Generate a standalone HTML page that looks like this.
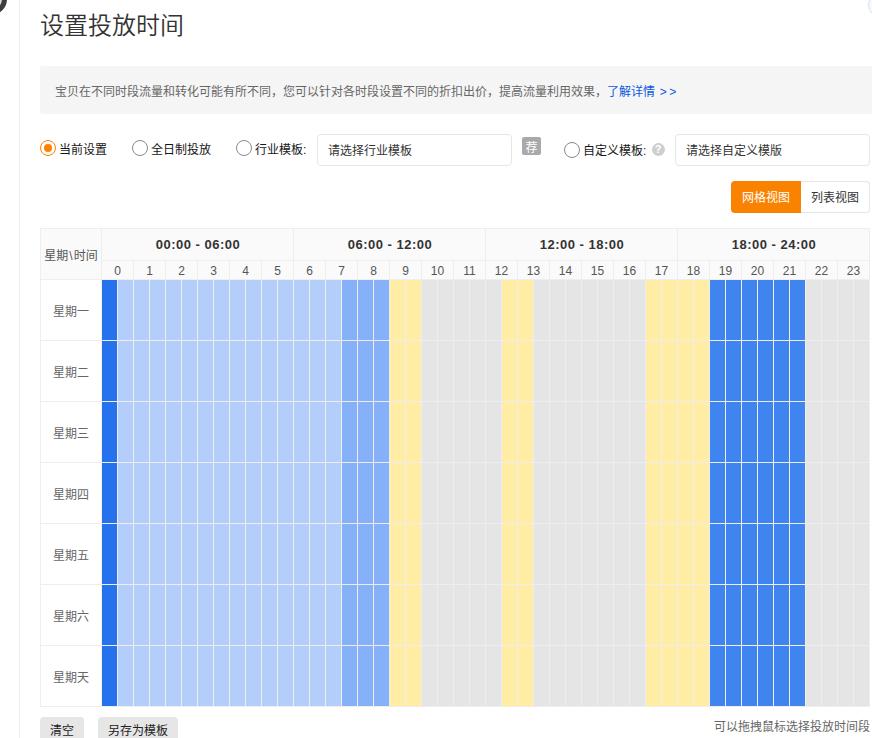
<!DOCTYPE html>
<html lang="zh-CN"><head><meta charset="utf-8"><title>设置投放时间</title>
<style>
*{box-sizing:border-box;margin:0;padding:0}
html,body{width:872px;height:738px;overflow:hidden;background:#fff}
body{position:relative;font-family:"Liberation Sans","Noto Sans CJK SC",sans-serif;font-size:12px;color:#333}
.abs{position:absolute}
.vline{left:19px;top:0;width:1px;height:738px;background:#eee}
.avatar{left:-25px;top:-17.5px;width:32px;height:32px;border-radius:50%;background:#cfd8f0;border:5px solid #3d3d3a}
.ring{left:868px;top:-7px;width:24px;height:24px;border-radius:50%;border:1.5px solid #dddde8;background:#f6f9ff}
h1{left:40px;top:8px;font-size:24px;font-weight:350;line-height:36px;color:#333;white-space:nowrap}
.banner{left:40px;top:66px;width:840px;height:48px;background:#f5f5f5;border-radius:3px;padding-left:15px;padding-top:2px;line-height:48px;color:#666;white-space:nowrap}
.banner a{color:#0a58e0;text-decoration:none}
.radio{width:16px;height:16px;border-radius:50%;border:1px solid #8a8a8a;background:#fff}
.radio.on{border-color:#ff8000}
.radio.on:after{content:"";position:absolute;left:3px;top:3px;width:8px;height:8px;border-radius:50%;background:#ff8000}
.lbl{line-height:16px;white-space:nowrap;color:#151515}
.sel{height:32px;border:1px solid #e6e6e6;border-radius:4px;background:#fff;line-height:30px;padding-top:1px;padding-left:10px;color:#333;white-space:nowrap}
.badge{left:522px;top:137px;width:19px;height:18px;background:#a9a9a9;border-radius:2px;color:#fff;font-size:12px;line-height:18px;padding-top:2px;text-align:center}
.help{left:651.5px;top:143px;width:13px;height:13px;border-radius:50%;background:#cecece;color:#fff;font-size:11px;font-weight:700;line-height:13px;text-align:center}
.btn1{left:731px;top:181px;width:70px;height:32px;background:#f98200;color:#fff;border-radius:4px 0 0 4px;line-height:32px;padding-top:1px;text-align:center}
.btn2{left:801px;top:181px;width:69px;height:32px;background:#fff;color:#333;border:1px solid #e6e6e6;border-left:0;border-radius:0 4px 4px 0;line-height:30px;padding-top:1px;text-align:center}
.tbl{left:40px;top:228px;width:830px;height:479px;border:1px solid #eee;background:#fff}
.hd{background:#fafafa}
.cell{position:absolute;width:15px;height:60px}
.c0{background:#2672ed}.c1{background:#b3cefb}.c2{background:#86b0f7}.c3{background:#4084f0}.cy{background:#ffeca5}.cg{background:#e5e5e5}
.gsep{position:absolute;background:#eee}
.hh{position:absolute;top:33px;height:19px;width:32px;text-align:center;line-height:19px;color:#555;font-size:12px}
.gh{position:absolute;top:0;height:32px;width:192px;text-align:center;line-height:32px;font-weight:700;font-size:13px;letter-spacing:0.5px;color:#333}
.rl{position:absolute;left:0;width:60px;height:60px;line-height:60px;padding-top:2px;text-align:center;color:#666}
.b{background:#e6e6e6;border-radius:4px;height:26px;line-height:28px;text-align:center;color:#222}
</style></head><body>
<div class="abs vline"></div>
<div class="abs avatar"></div>
<div class="abs ring"></div>
<h1 class="abs">设置投放时间</h1>
<div class="abs banner">宝贝在不同时段流量和转化可能有所不同，您可以针对各时段设置不同的折扣出价，提高流量利用效果，<a>了解详情 <span style="letter-spacing:2.3px;margin-left:1.5px">&gt;&gt;</span></a></div>

<div class="abs radio on" style="left:40px;top:140px"></div><div class="abs lbl" style="left:59px;top:142px">当前设置</div>
<div class="abs radio" style="left:132px;top:140px"></div><div class="abs lbl" style="left:151px;top:142px">全日制投放</div>
<div class="abs radio" style="left:236px;top:140px"></div><div class="abs lbl" style="left:255px;top:142px">行业模板:</div>
<div class="abs sel" style="left:317px;top:134px;width:195px">请选择行业模板</div>
<div class="abs badge">荐</div>
<div class="abs radio" style="left:564px;top:142px"></div><div class="abs lbl" style="left:583px;top:143px">自定义模板:</div>
<div class="abs help">?</div>
<div class="abs sel" style="left:675px;top:134px;width:195px">请选择自定义模版</div>
<div class="abs btn1">网格视图</div>
<div class="abs btn2">列表视图</div>

<div class="abs tbl">
<div class="abs hd" style="left:0;top:0;width:828px;height:51px"></div>
<div class="abs" style="left:0;top:0;width:60px;height:51px;line-height:51px;padding-top:1.5px;text-align:center;color:#555;white-space:nowrap">星期<span style="margin:0 1px">\</span>时间</div>
<div class="gsep" style="left:60px;top:0;width:1px;height:477px"></div>
<div class="gsep" style="left:61px;top:31px;width:768px;height:1px"></div>
<div class="gsep" style="left:0;top:50px;width:829px;height:1px"></div>
<div class="gh" style="left:61px;height:31px;line-height:31px">00:00 - 06:00</div>
<div class="gsep" style="left:252px;top:0;width:1px;height:51px"></div>
<div class="gh" style="left:253px;height:31px;line-height:31px">06:00 - 12:00</div>
<div class="gsep" style="left:444px;top:0;width:1px;height:51px"></div>
<div class="gh" style="left:445px;height:31px;line-height:31px">12:00 - 18:00</div>
<div class="gsep" style="left:636px;top:0;width:1px;height:51px"></div>
<div class="gh" style="left:637px;height:31px;line-height:31px">18:00 - 24:00</div>
<div class="hh" style="left:61px;width:31px">0</div>
<div class="gsep" style="left:92px;top:32px;width:1px;height:19px"></div>
<div class="hh" style="left:93px;width:31px">1</div>
<div class="gsep" style="left:124px;top:32px;width:1px;height:19px"></div>
<div class="hh" style="left:125px;width:31px">2</div>
<div class="gsep" style="left:156px;top:32px;width:1px;height:19px"></div>
<div class="hh" style="left:157px;width:31px">3</div>
<div class="gsep" style="left:188px;top:32px;width:1px;height:19px"></div>
<div class="hh" style="left:189px;width:31px">4</div>
<div class="gsep" style="left:220px;top:32px;width:1px;height:19px"></div>
<div class="hh" style="left:221px;width:31px">5</div>
<div class="gsep" style="left:252px;top:32px;width:1px;height:19px"></div>
<div class="hh" style="left:253px;width:31px">6</div>
<div class="gsep" style="left:284px;top:32px;width:1px;height:19px"></div>
<div class="hh" style="left:285px;width:31px">7</div>
<div class="gsep" style="left:316px;top:32px;width:1px;height:19px"></div>
<div class="hh" style="left:317px;width:31px">8</div>
<div class="gsep" style="left:348px;top:32px;width:1px;height:19px"></div>
<div class="hh" style="left:349px;width:31px">9</div>
<div class="gsep" style="left:380px;top:32px;width:1px;height:19px"></div>
<div class="hh" style="left:381px;width:31px">10</div>
<div class="gsep" style="left:412px;top:32px;width:1px;height:19px"></div>
<div class="hh" style="left:413px;width:31px">11</div>
<div class="gsep" style="left:444px;top:32px;width:1px;height:19px"></div>
<div class="hh" style="left:445px;width:31px">12</div>
<div class="gsep" style="left:476px;top:32px;width:1px;height:19px"></div>
<div class="hh" style="left:477px;width:31px">13</div>
<div class="gsep" style="left:508px;top:32px;width:1px;height:19px"></div>
<div class="hh" style="left:509px;width:31px">14</div>
<div class="gsep" style="left:540px;top:32px;width:1px;height:19px"></div>
<div class="hh" style="left:541px;width:31px">15</div>
<div class="gsep" style="left:572px;top:32px;width:1px;height:19px"></div>
<div class="hh" style="left:573px;width:31px">16</div>
<div class="gsep" style="left:604px;top:32px;width:1px;height:19px"></div>
<div class="hh" style="left:605px;width:31px">17</div>
<div class="gsep" style="left:636px;top:32px;width:1px;height:19px"></div>
<div class="hh" style="left:637px;width:31px">18</div>
<div class="gsep" style="left:668px;top:32px;width:1px;height:19px"></div>
<div class="hh" style="left:669px;width:31px">19</div>
<div class="gsep" style="left:700px;top:32px;width:1px;height:19px"></div>
<div class="hh" style="left:701px;width:31px">20</div>
<div class="gsep" style="left:732px;top:32px;width:1px;height:19px"></div>
<div class="hh" style="left:733px;width:31px">21</div>
<div class="gsep" style="left:764px;top:32px;width:1px;height:19px"></div>
<div class="hh" style="left:765px;width:31px">22</div>
<div class="gsep" style="left:796px;top:32px;width:1px;height:19px"></div>
<div class="hh" style="left:797px;width:31px">23</div>
<div class="rl" style="top:51px">星期一</div>
<div class="gsep" style="left:61px;top:51px;width:768px;height:61px;background:#eee"></div>
<div class="gsep" style="left:0;top:111px;width:61px;height:1px"></div>
<div class="cell c0" style="left:61px;top:51px"></div>
<div class="cell c1" style="left:77px;top:51px"></div>
<div class="cell c1" style="left:93px;top:51px"></div>
<div class="cell c1" style="left:109px;top:51px"></div>
<div class="cell c1" style="left:125px;top:51px"></div>
<div class="cell c1" style="left:141px;top:51px"></div>
<div class="cell c1" style="left:157px;top:51px"></div>
<div class="cell c1" style="left:173px;top:51px"></div>
<div class="cell c1" style="left:189px;top:51px"></div>
<div class="cell c1" style="left:205px;top:51px"></div>
<div class="cell c1" style="left:221px;top:51px"></div>
<div class="cell c1" style="left:237px;top:51px"></div>
<div class="cell c1" style="left:253px;top:51px"></div>
<div class="cell c1" style="left:269px;top:51px"></div>
<div class="cell c1" style="left:285px;top:51px"></div>
<div class="cell c2" style="left:301px;top:51px"></div>
<div class="cell c2" style="left:317px;top:51px"></div>
<div class="cell c2" style="left:333px;top:51px"></div>
<div class="cell cy" style="left:349px;top:51px"></div>
<div class="cell cy" style="left:365px;top:51px"></div>
<div class="cell cg" style="left:381px;top:51px"></div>
<div class="cell cg" style="left:397px;top:51px"></div>
<div class="cell cg" style="left:413px;top:51px"></div>
<div class="cell cg" style="left:429px;top:51px"></div>
<div class="cell cg" style="left:445px;top:51px"></div>
<div class="cell cy" style="left:461px;top:51px"></div>
<div class="cell cy" style="left:477px;top:51px"></div>
<div class="cell cg" style="left:493px;top:51px"></div>
<div class="cell cg" style="left:509px;top:51px"></div>
<div class="cell cg" style="left:525px;top:51px"></div>
<div class="cell cg" style="left:541px;top:51px"></div>
<div class="cell cg" style="left:557px;top:51px"></div>
<div class="cell cg" style="left:573px;top:51px"></div>
<div class="cell cg" style="left:589px;top:51px"></div>
<div class="cell cy" style="left:605px;top:51px"></div>
<div class="cell cy" style="left:621px;top:51px"></div>
<div class="cell cy" style="left:637px;top:51px"></div>
<div class="cell cy" style="left:653px;top:51px"></div>
<div class="cell c3" style="left:669px;top:51px"></div>
<div class="cell c3" style="left:685px;top:51px"></div>
<div class="cell c3" style="left:701px;top:51px"></div>
<div class="cell c3" style="left:717px;top:51px"></div>
<div class="cell c3" style="left:733px;top:51px"></div>
<div class="cell c3" style="left:749px;top:51px"></div>
<div class="cell cg" style="left:765px;top:51px"></div>
<div class="cell cg" style="left:781px;top:51px"></div>
<div class="cell cg" style="left:797px;top:51px"></div>
<div class="cell cg" style="left:813px;top:51px"></div>
<div class="rl" style="top:112px">星期二</div>
<div class="gsep" style="left:61px;top:112px;width:768px;height:61px;background:#eee"></div>
<div class="gsep" style="left:0;top:172px;width:61px;height:1px"></div>
<div class="cell c0" style="left:61px;top:112px"></div>
<div class="cell c1" style="left:77px;top:112px"></div>
<div class="cell c1" style="left:93px;top:112px"></div>
<div class="cell c1" style="left:109px;top:112px"></div>
<div class="cell c1" style="left:125px;top:112px"></div>
<div class="cell c1" style="left:141px;top:112px"></div>
<div class="cell c1" style="left:157px;top:112px"></div>
<div class="cell c1" style="left:173px;top:112px"></div>
<div class="cell c1" style="left:189px;top:112px"></div>
<div class="cell c1" style="left:205px;top:112px"></div>
<div class="cell c1" style="left:221px;top:112px"></div>
<div class="cell c1" style="left:237px;top:112px"></div>
<div class="cell c1" style="left:253px;top:112px"></div>
<div class="cell c1" style="left:269px;top:112px"></div>
<div class="cell c1" style="left:285px;top:112px"></div>
<div class="cell c2" style="left:301px;top:112px"></div>
<div class="cell c2" style="left:317px;top:112px"></div>
<div class="cell c2" style="left:333px;top:112px"></div>
<div class="cell cy" style="left:349px;top:112px"></div>
<div class="cell cy" style="left:365px;top:112px"></div>
<div class="cell cg" style="left:381px;top:112px"></div>
<div class="cell cg" style="left:397px;top:112px"></div>
<div class="cell cg" style="left:413px;top:112px"></div>
<div class="cell cg" style="left:429px;top:112px"></div>
<div class="cell cg" style="left:445px;top:112px"></div>
<div class="cell cy" style="left:461px;top:112px"></div>
<div class="cell cy" style="left:477px;top:112px"></div>
<div class="cell cg" style="left:493px;top:112px"></div>
<div class="cell cg" style="left:509px;top:112px"></div>
<div class="cell cg" style="left:525px;top:112px"></div>
<div class="cell cg" style="left:541px;top:112px"></div>
<div class="cell cg" style="left:557px;top:112px"></div>
<div class="cell cg" style="left:573px;top:112px"></div>
<div class="cell cg" style="left:589px;top:112px"></div>
<div class="cell cy" style="left:605px;top:112px"></div>
<div class="cell cy" style="left:621px;top:112px"></div>
<div class="cell cy" style="left:637px;top:112px"></div>
<div class="cell cy" style="left:653px;top:112px"></div>
<div class="cell c3" style="left:669px;top:112px"></div>
<div class="cell c3" style="left:685px;top:112px"></div>
<div class="cell c3" style="left:701px;top:112px"></div>
<div class="cell c3" style="left:717px;top:112px"></div>
<div class="cell c3" style="left:733px;top:112px"></div>
<div class="cell c3" style="left:749px;top:112px"></div>
<div class="cell cg" style="left:765px;top:112px"></div>
<div class="cell cg" style="left:781px;top:112px"></div>
<div class="cell cg" style="left:797px;top:112px"></div>
<div class="cell cg" style="left:813px;top:112px"></div>
<div class="rl" style="top:173px">星期三</div>
<div class="gsep" style="left:61px;top:173px;width:768px;height:61px;background:#eee"></div>
<div class="gsep" style="left:0;top:233px;width:61px;height:1px"></div>
<div class="cell c0" style="left:61px;top:173px"></div>
<div class="cell c1" style="left:77px;top:173px"></div>
<div class="cell c1" style="left:93px;top:173px"></div>
<div class="cell c1" style="left:109px;top:173px"></div>
<div class="cell c1" style="left:125px;top:173px"></div>
<div class="cell c1" style="left:141px;top:173px"></div>
<div class="cell c1" style="left:157px;top:173px"></div>
<div class="cell c1" style="left:173px;top:173px"></div>
<div class="cell c1" style="left:189px;top:173px"></div>
<div class="cell c1" style="left:205px;top:173px"></div>
<div class="cell c1" style="left:221px;top:173px"></div>
<div class="cell c1" style="left:237px;top:173px"></div>
<div class="cell c1" style="left:253px;top:173px"></div>
<div class="cell c1" style="left:269px;top:173px"></div>
<div class="cell c1" style="left:285px;top:173px"></div>
<div class="cell c2" style="left:301px;top:173px"></div>
<div class="cell c2" style="left:317px;top:173px"></div>
<div class="cell c2" style="left:333px;top:173px"></div>
<div class="cell cy" style="left:349px;top:173px"></div>
<div class="cell cy" style="left:365px;top:173px"></div>
<div class="cell cg" style="left:381px;top:173px"></div>
<div class="cell cg" style="left:397px;top:173px"></div>
<div class="cell cg" style="left:413px;top:173px"></div>
<div class="cell cg" style="left:429px;top:173px"></div>
<div class="cell cg" style="left:445px;top:173px"></div>
<div class="cell cy" style="left:461px;top:173px"></div>
<div class="cell cy" style="left:477px;top:173px"></div>
<div class="cell cg" style="left:493px;top:173px"></div>
<div class="cell cg" style="left:509px;top:173px"></div>
<div class="cell cg" style="left:525px;top:173px"></div>
<div class="cell cg" style="left:541px;top:173px"></div>
<div class="cell cg" style="left:557px;top:173px"></div>
<div class="cell cg" style="left:573px;top:173px"></div>
<div class="cell cg" style="left:589px;top:173px"></div>
<div class="cell cy" style="left:605px;top:173px"></div>
<div class="cell cy" style="left:621px;top:173px"></div>
<div class="cell cy" style="left:637px;top:173px"></div>
<div class="cell cy" style="left:653px;top:173px"></div>
<div class="cell c3" style="left:669px;top:173px"></div>
<div class="cell c3" style="left:685px;top:173px"></div>
<div class="cell c3" style="left:701px;top:173px"></div>
<div class="cell c3" style="left:717px;top:173px"></div>
<div class="cell c3" style="left:733px;top:173px"></div>
<div class="cell c3" style="left:749px;top:173px"></div>
<div class="cell cg" style="left:765px;top:173px"></div>
<div class="cell cg" style="left:781px;top:173px"></div>
<div class="cell cg" style="left:797px;top:173px"></div>
<div class="cell cg" style="left:813px;top:173px"></div>
<div class="rl" style="top:234px">星期四</div>
<div class="gsep" style="left:61px;top:234px;width:768px;height:61px;background:#eee"></div>
<div class="gsep" style="left:0;top:294px;width:61px;height:1px"></div>
<div class="cell c0" style="left:61px;top:234px"></div>
<div class="cell c1" style="left:77px;top:234px"></div>
<div class="cell c1" style="left:93px;top:234px"></div>
<div class="cell c1" style="left:109px;top:234px"></div>
<div class="cell c1" style="left:125px;top:234px"></div>
<div class="cell c1" style="left:141px;top:234px"></div>
<div class="cell c1" style="left:157px;top:234px"></div>
<div class="cell c1" style="left:173px;top:234px"></div>
<div class="cell c1" style="left:189px;top:234px"></div>
<div class="cell c1" style="left:205px;top:234px"></div>
<div class="cell c1" style="left:221px;top:234px"></div>
<div class="cell c1" style="left:237px;top:234px"></div>
<div class="cell c1" style="left:253px;top:234px"></div>
<div class="cell c1" style="left:269px;top:234px"></div>
<div class="cell c1" style="left:285px;top:234px"></div>
<div class="cell c2" style="left:301px;top:234px"></div>
<div class="cell c2" style="left:317px;top:234px"></div>
<div class="cell c2" style="left:333px;top:234px"></div>
<div class="cell cy" style="left:349px;top:234px"></div>
<div class="cell cy" style="left:365px;top:234px"></div>
<div class="cell cg" style="left:381px;top:234px"></div>
<div class="cell cg" style="left:397px;top:234px"></div>
<div class="cell cg" style="left:413px;top:234px"></div>
<div class="cell cg" style="left:429px;top:234px"></div>
<div class="cell cg" style="left:445px;top:234px"></div>
<div class="cell cy" style="left:461px;top:234px"></div>
<div class="cell cy" style="left:477px;top:234px"></div>
<div class="cell cg" style="left:493px;top:234px"></div>
<div class="cell cg" style="left:509px;top:234px"></div>
<div class="cell cg" style="left:525px;top:234px"></div>
<div class="cell cg" style="left:541px;top:234px"></div>
<div class="cell cg" style="left:557px;top:234px"></div>
<div class="cell cg" style="left:573px;top:234px"></div>
<div class="cell cg" style="left:589px;top:234px"></div>
<div class="cell cy" style="left:605px;top:234px"></div>
<div class="cell cy" style="left:621px;top:234px"></div>
<div class="cell cy" style="left:637px;top:234px"></div>
<div class="cell cy" style="left:653px;top:234px"></div>
<div class="cell c3" style="left:669px;top:234px"></div>
<div class="cell c3" style="left:685px;top:234px"></div>
<div class="cell c3" style="left:701px;top:234px"></div>
<div class="cell c3" style="left:717px;top:234px"></div>
<div class="cell c3" style="left:733px;top:234px"></div>
<div class="cell c3" style="left:749px;top:234px"></div>
<div class="cell cg" style="left:765px;top:234px"></div>
<div class="cell cg" style="left:781px;top:234px"></div>
<div class="cell cg" style="left:797px;top:234px"></div>
<div class="cell cg" style="left:813px;top:234px"></div>
<div class="rl" style="top:295px">星期五</div>
<div class="gsep" style="left:61px;top:295px;width:768px;height:61px;background:#eee"></div>
<div class="gsep" style="left:0;top:355px;width:61px;height:1px"></div>
<div class="cell c0" style="left:61px;top:295px"></div>
<div class="cell c1" style="left:77px;top:295px"></div>
<div class="cell c1" style="left:93px;top:295px"></div>
<div class="cell c1" style="left:109px;top:295px"></div>
<div class="cell c1" style="left:125px;top:295px"></div>
<div class="cell c1" style="left:141px;top:295px"></div>
<div class="cell c1" style="left:157px;top:295px"></div>
<div class="cell c1" style="left:173px;top:295px"></div>
<div class="cell c1" style="left:189px;top:295px"></div>
<div class="cell c1" style="left:205px;top:295px"></div>
<div class="cell c1" style="left:221px;top:295px"></div>
<div class="cell c1" style="left:237px;top:295px"></div>
<div class="cell c1" style="left:253px;top:295px"></div>
<div class="cell c1" style="left:269px;top:295px"></div>
<div class="cell c1" style="left:285px;top:295px"></div>
<div class="cell c2" style="left:301px;top:295px"></div>
<div class="cell c2" style="left:317px;top:295px"></div>
<div class="cell c2" style="left:333px;top:295px"></div>
<div class="cell cy" style="left:349px;top:295px"></div>
<div class="cell cy" style="left:365px;top:295px"></div>
<div class="cell cg" style="left:381px;top:295px"></div>
<div class="cell cg" style="left:397px;top:295px"></div>
<div class="cell cg" style="left:413px;top:295px"></div>
<div class="cell cg" style="left:429px;top:295px"></div>
<div class="cell cg" style="left:445px;top:295px"></div>
<div class="cell cy" style="left:461px;top:295px"></div>
<div class="cell cy" style="left:477px;top:295px"></div>
<div class="cell cg" style="left:493px;top:295px"></div>
<div class="cell cg" style="left:509px;top:295px"></div>
<div class="cell cg" style="left:525px;top:295px"></div>
<div class="cell cg" style="left:541px;top:295px"></div>
<div class="cell cg" style="left:557px;top:295px"></div>
<div class="cell cg" style="left:573px;top:295px"></div>
<div class="cell cg" style="left:589px;top:295px"></div>
<div class="cell cy" style="left:605px;top:295px"></div>
<div class="cell cy" style="left:621px;top:295px"></div>
<div class="cell cy" style="left:637px;top:295px"></div>
<div class="cell cy" style="left:653px;top:295px"></div>
<div class="cell c3" style="left:669px;top:295px"></div>
<div class="cell c3" style="left:685px;top:295px"></div>
<div class="cell c3" style="left:701px;top:295px"></div>
<div class="cell c3" style="left:717px;top:295px"></div>
<div class="cell c3" style="left:733px;top:295px"></div>
<div class="cell c3" style="left:749px;top:295px"></div>
<div class="cell cg" style="left:765px;top:295px"></div>
<div class="cell cg" style="left:781px;top:295px"></div>
<div class="cell cg" style="left:797px;top:295px"></div>
<div class="cell cg" style="left:813px;top:295px"></div>
<div class="rl" style="top:356px">星期六</div>
<div class="gsep" style="left:61px;top:356px;width:768px;height:61px;background:#eee"></div>
<div class="gsep" style="left:0;top:416px;width:61px;height:1px"></div>
<div class="cell c0" style="left:61px;top:356px"></div>
<div class="cell c1" style="left:77px;top:356px"></div>
<div class="cell c1" style="left:93px;top:356px"></div>
<div class="cell c1" style="left:109px;top:356px"></div>
<div class="cell c1" style="left:125px;top:356px"></div>
<div class="cell c1" style="left:141px;top:356px"></div>
<div class="cell c1" style="left:157px;top:356px"></div>
<div class="cell c1" style="left:173px;top:356px"></div>
<div class="cell c1" style="left:189px;top:356px"></div>
<div class="cell c1" style="left:205px;top:356px"></div>
<div class="cell c1" style="left:221px;top:356px"></div>
<div class="cell c1" style="left:237px;top:356px"></div>
<div class="cell c1" style="left:253px;top:356px"></div>
<div class="cell c1" style="left:269px;top:356px"></div>
<div class="cell c1" style="left:285px;top:356px"></div>
<div class="cell c2" style="left:301px;top:356px"></div>
<div class="cell c2" style="left:317px;top:356px"></div>
<div class="cell c2" style="left:333px;top:356px"></div>
<div class="cell cy" style="left:349px;top:356px"></div>
<div class="cell cy" style="left:365px;top:356px"></div>
<div class="cell cg" style="left:381px;top:356px"></div>
<div class="cell cg" style="left:397px;top:356px"></div>
<div class="cell cg" style="left:413px;top:356px"></div>
<div class="cell cg" style="left:429px;top:356px"></div>
<div class="cell cg" style="left:445px;top:356px"></div>
<div class="cell cy" style="left:461px;top:356px"></div>
<div class="cell cy" style="left:477px;top:356px"></div>
<div class="cell cg" style="left:493px;top:356px"></div>
<div class="cell cg" style="left:509px;top:356px"></div>
<div class="cell cg" style="left:525px;top:356px"></div>
<div class="cell cg" style="left:541px;top:356px"></div>
<div class="cell cg" style="left:557px;top:356px"></div>
<div class="cell cg" style="left:573px;top:356px"></div>
<div class="cell cg" style="left:589px;top:356px"></div>
<div class="cell cy" style="left:605px;top:356px"></div>
<div class="cell cy" style="left:621px;top:356px"></div>
<div class="cell cy" style="left:637px;top:356px"></div>
<div class="cell cy" style="left:653px;top:356px"></div>
<div class="cell c3" style="left:669px;top:356px"></div>
<div class="cell c3" style="left:685px;top:356px"></div>
<div class="cell c3" style="left:701px;top:356px"></div>
<div class="cell c3" style="left:717px;top:356px"></div>
<div class="cell c3" style="left:733px;top:356px"></div>
<div class="cell c3" style="left:749px;top:356px"></div>
<div class="cell cg" style="left:765px;top:356px"></div>
<div class="cell cg" style="left:781px;top:356px"></div>
<div class="cell cg" style="left:797px;top:356px"></div>
<div class="cell cg" style="left:813px;top:356px"></div>
<div class="rl" style="top:417px">星期天</div>
<div class="gsep" style="left:61px;top:417px;width:768px;height:61px;background:#eee"></div>
<div class="cell c0" style="left:61px;top:417px"></div>
<div class="cell c1" style="left:77px;top:417px"></div>
<div class="cell c1" style="left:93px;top:417px"></div>
<div class="cell c1" style="left:109px;top:417px"></div>
<div class="cell c1" style="left:125px;top:417px"></div>
<div class="cell c1" style="left:141px;top:417px"></div>
<div class="cell c1" style="left:157px;top:417px"></div>
<div class="cell c1" style="left:173px;top:417px"></div>
<div class="cell c1" style="left:189px;top:417px"></div>
<div class="cell c1" style="left:205px;top:417px"></div>
<div class="cell c1" style="left:221px;top:417px"></div>
<div class="cell c1" style="left:237px;top:417px"></div>
<div class="cell c1" style="left:253px;top:417px"></div>
<div class="cell c1" style="left:269px;top:417px"></div>
<div class="cell c1" style="left:285px;top:417px"></div>
<div class="cell c2" style="left:301px;top:417px"></div>
<div class="cell c2" style="left:317px;top:417px"></div>
<div class="cell c2" style="left:333px;top:417px"></div>
<div class="cell cy" style="left:349px;top:417px"></div>
<div class="cell cy" style="left:365px;top:417px"></div>
<div class="cell cg" style="left:381px;top:417px"></div>
<div class="cell cg" style="left:397px;top:417px"></div>
<div class="cell cg" style="left:413px;top:417px"></div>
<div class="cell cg" style="left:429px;top:417px"></div>
<div class="cell cg" style="left:445px;top:417px"></div>
<div class="cell cy" style="left:461px;top:417px"></div>
<div class="cell cy" style="left:477px;top:417px"></div>
<div class="cell cg" style="left:493px;top:417px"></div>
<div class="cell cg" style="left:509px;top:417px"></div>
<div class="cell cg" style="left:525px;top:417px"></div>
<div class="cell cg" style="left:541px;top:417px"></div>
<div class="cell cg" style="left:557px;top:417px"></div>
<div class="cell cg" style="left:573px;top:417px"></div>
<div class="cell cg" style="left:589px;top:417px"></div>
<div class="cell cy" style="left:605px;top:417px"></div>
<div class="cell cy" style="left:621px;top:417px"></div>
<div class="cell cy" style="left:637px;top:417px"></div>
<div class="cell cy" style="left:653px;top:417px"></div>
<div class="cell c3" style="left:669px;top:417px"></div>
<div class="cell c3" style="left:685px;top:417px"></div>
<div class="cell c3" style="left:701px;top:417px"></div>
<div class="cell c3" style="left:717px;top:417px"></div>
<div class="cell c3" style="left:733px;top:417px"></div>
<div class="cell c3" style="left:749px;top:417px"></div>
<div class="cell cg" style="left:765px;top:417px"></div>
<div class="cell cg" style="left:781px;top:417px"></div>
<div class="cell cg" style="left:797px;top:417px"></div>
<div class="cell cg" style="left:813px;top:417px"></div>
</div>

<div class="abs b" style="left:40px;top:717px;width:44px">清空</div>
<div class="abs b" style="left:98px;top:717px;width:80px">另存为模板</div>
<div class="abs" style="left:714px;top:718px;line-height:18px;color:#666;white-space:nowrap">可以拖拽鼠标选择投放时间段</div>
</body></html>
